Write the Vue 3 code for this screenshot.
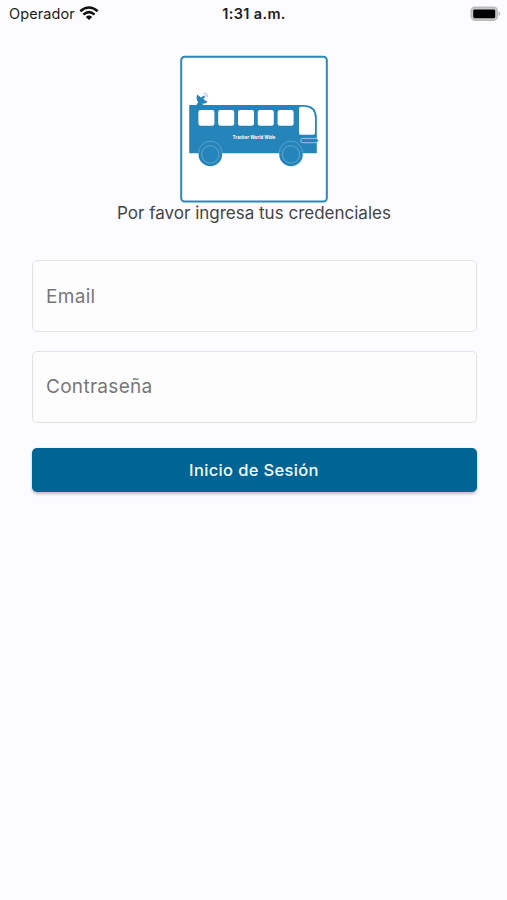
<script setup>
import { ref } from 'vue'

const email = ref('')
const password = ref('')
const windows = [18.4, 38.2, 58, 77.8, 97.6]
const wheels = [30.3, 111]
</script>

<template>
  <div class="screen">
    <header class="status">
      <div class="carrier">
        <span class="carrier-name">Operador</span>
        <svg class="wifi" width="20" height="15" viewBox="0 0 20 15">
          <g fill="none" stroke="#111" stroke-width="2.5">
            <path d="M1.3 5.3Q10-2.3 18.7 5.3" />
            <path d="M4.4 8.7Q10 3.5 15.6 8.7" />
          </g>
          <path d="M6.8 10.9Q10 8.1 13.2 10.9L10 14.1Z" fill="#111" />
        </svg>
      </div>
      <span class="time">1:31 a.m.</span>
      <div class="battery">
        <svg width="32" height="16" viewBox="0 0 32 16">
          <rect x="1.2" y="1.2" width="26.2" height="13" rx="3.8" fill="#c9c9ca" stroke="#bababc" stroke-width="1.4" />
          <rect x="3.2" y="3.4" width="22" height="8.8" rx="1.4" fill="#000" />
          <path d="M28.6 5.3Q32 7.7 28.6 10.1Z" fill="#b5b5b7" />
        </svg>
      </div>
    </header>

    <main class="login">
      <svg class="logo" width="148" height="148" viewBox="0 0 148 148">
        <rect x="1.2" y="1.7" width="145.6" height="144.8" rx="3.5" fill="#fff" stroke="#2b88b8" stroke-width="2" />
        <g fill="#2585bb">
          <path d="M9.2 51Q9.2 50 10.2 50H123Q136.8 50 136.8 63V98.2H9.2Z" />
          <path d="M16.2 50.5L18.1 47.2Q15.7 43.6 17.2 39.4L21 42.6L23.7 40.4L25.2 41.9L23.2 44L27.6 47Q25 49.2 22.3 48.6L23.4 50.5Z" />
        </g>
        <path d="M23.5 38.4Q27.6 37.8 27.8 42M24.8 40.1Q26.1 40 26.2 41.4" fill="none" stroke="#91bdd6" stroke-width=".8" />
        <rect v-for="x in windows" :key="x" :x="x" y="55" width="16" height="15.8" rx="2.2" fill="#fff" />
        <path d="M119 53.4Q119 51.7 120.7 51.7H124.5Q135 52.2 135 63V78Q135 79.7 133.3 79.7H120.7Q119 79.7 119 78Z" fill="#fff" />
        <rect x="120.7" y="83.4" width="17.5" height="4.3" rx="2.1" fill="#2585bb" stroke="#b4d7ea" stroke-width=".8" />
        <g v-for="x in wheels" :key="x">
          <circle :cx="x" cy="99.4" r="11.8" fill="#2585bb" />
          <path :d="`M${x - 11.6} 97.7A11.6 11.6 0 0 1 ${x + 11.6} 97.7`" fill="none" stroke="#69aed3" stroke-width=".7" />
          <circle :cx="x" cy="99.4" r="8.7" fill="none" stroke="#75b4d5" stroke-width=".7" />
        </g>
        <text x="74" y="83.8" text-anchor="middle" class="brand" textLength="42.5">Tracker World Wide</text>
      </svg>
      <p class="prompt">Por favor ingresa tus credenciales</p>
      <form class="form" @submit.prevent>
        <input v-model="email" class="field" type="email" placeholder="Email" />
        <input v-model="password" class="field" type="password" placeholder="Contraseña" />
        <button class="submit" type="submit">Inicio de Sesión</button>
      </form>
    </main>
  </div>
</template>

<style>
body {
  margin: 0;
  background: #fcfcfe;
}
</style>

<style scoped>
.screen {
  height: 900px;
  background: #fcfcfe;
  font-family: Inter, "Liberation Sans", sans-serif;
}
.status {
  display: grid;
  grid-template-columns: 1fr auto 1fr;
  align-items: center;
  height: 27px;
  padding: 0 5px 0 9px;
  color: #1c1c1e;
  box-sizing: border-box;
}
.carrier {
  display: flex;
  align-items: center;
  gap: 4px;
}
.carrier-name {
  font-size: 14.5px;
  letter-spacing: 0.1px;
}
.wifi {
  margin-top: -1px;
}
.time {
  margin-right: 3px;
  font-size: 14.5px;
  font-weight: 600;
  letter-spacing: 0.35px;
}
.battery {
  display: flex;
  justify-content: flex-end;
}
.login {
  display: flex;
  flex-direction: column;
  align-items: center;
  padding: 28px 30.5px 0 31.5px;
}
.logo {
  display: block;
}
.brand {
  font-family: "Open Sans", sans-serif;
  font-size: 4.3px;
  font-weight: 700;
  fill: #fff;
}
.prompt {
  margin: 0;
  font-size: 17px;
  line-height: 20px;
  color: #444446;
  white-space: nowrap;
}
.form {
  display: flex;
  flex-direction: column;
  width: 100%;
  margin-top: 37px;
}
.field {
  box-sizing: border-box;
  width: 100%;
  height: 72px;
  margin-bottom: 18.5px;
  padding: 0 14px 0 13.5px;
  border: 1.5px solid #e3e3e5;
  border-radius: 5px;
  background: #fdfdfe;
  font-family: inherit;
  font-size: 19px;
  letter-spacing: 0.3px;
  outline: none;
}
.field::placeholder {
  color: #777779;
  opacity: 1;
}
.submit {
  height: 44px;
  margin-top: 7px;
  padding: 0;
  border: 0;
  border-radius: 5px;
  background: #006494;
  box-shadow: 0 1.5px 3px rgba(0, 0, 0, 0.25);
  color: #f5fbff;
  font-family: inherit;
  font-size: 16.5px;
  font-weight: 500;
  letter-spacing: 0.35px;
}
</style>
